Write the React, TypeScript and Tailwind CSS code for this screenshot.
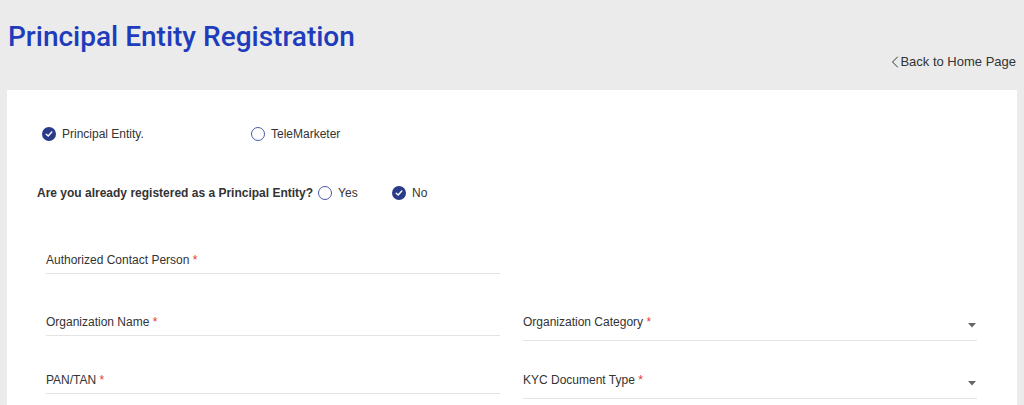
import { ChevronLeft } from 'lucide-react';

const Radio = ({ checked, label }: { checked?: boolean; label: string }) => (
    <label className="flex items-center gap-[6px] text-[12px] text-[#333]">
        {checked ? (
            <span className="w-[14px] h-[14px] rounded-full bg-[#2a3a8a] flex items-center justify-center">
                <svg width="8" height="8" viewBox="0 0 8 8" fill="none">
                    <path d="M1.2 4.2 L3.2 6 L6.8 2" stroke="white" strokeWidth="1.4" strokeLinecap="round" strokeLinejoin="round" />
                </svg>
            </span>
        ) : (
            <span className="w-[14px] h-[14px] rounded-full border border-[#4a5aa8] bg-white" />
        )}
        <span>{label}</span>
    </label>
);

const Field = ({ label, select }: { label: string; select?: boolean }) => (
    <div className={`w-[454px] border-b border-[#e3e3e3] flex items-start justify-between ${select ? 'h-[26px]' : 'h-[21px]'}`}>
        <span className="text-[12px] text-[#333] leading-[14px]">
            {label} <span className="text-[#e53935]">*</span>
        </span>
        {select && (
            <svg width="8" height="5" viewBox="0 0 8 5" className="mr-[1px] mt-[8px]">
                <path d="M0 0 H8 L4 4.5 Z" fill="#666" />
            </svg>
        )}
    </div>
);

export default function App() {
    return (
        <div className="min-h-screen h-[405px] overflow-hidden bg-[#ebebeb] font-['Liberation_Sans',Arial,sans-serif]">
            <div className="pl-[8px] pt-[21px]">
                <h1 className="text-[28px] leading-[32px] font-medium text-[#1e3cbc] font-['Roboto',sans-serif]">Principal Entity Registration</h1>
            </div>
            <div className="flex justify-end pr-[8px] mt-[0px] h-[18px]">
                <a className="flex items-center text-[13px] text-[#333]">
                    <ChevronLeft size={20} strokeWidth={1.2} className="-mr-[5px] -ml-[4px]" />
                    Back to Home Page
                </a>
            </div>
            <div className="mx-[7px] mt-[19px] bg-white h-[400px] pt-[37px] pl-[35px]">
                <div className="flex h-[14px] items-center">
                    <div className="w-[209px]"><Radio checked label="Principal Entity." /></div>
                    <Radio label="TeleMarketer" />
                </div>
                <div className="flex items-center h-[14px] mt-[45px] -ml-[5px]">
                    <span className="text-[12px] font-bold text-[#333] mr-[5px]">Are you already registered as a Principal Entity?</span>
                    <div className="w-[74px]"><Radio label="Yes" /></div>
                    <Radio checked label="No" />
                </div>
                <div className="ml-[4px] mt-[53px] flex flex-col">
                    <Field label="Authorized Contact Person" />
                    <div className="flex gap-[23px] mt-[41px] items-start">
                        <Field label="Organization Name" />
                        <Field label="Organization Category" select />
                    </div>
                    <div className="flex gap-[23px] mt-[32px] items-start">
                        <Field label="PAN/TAN" />
                        <Field label="KYC Document Type" select />
                    </div>
                </div>
            </div>
        </div>
    );
}
